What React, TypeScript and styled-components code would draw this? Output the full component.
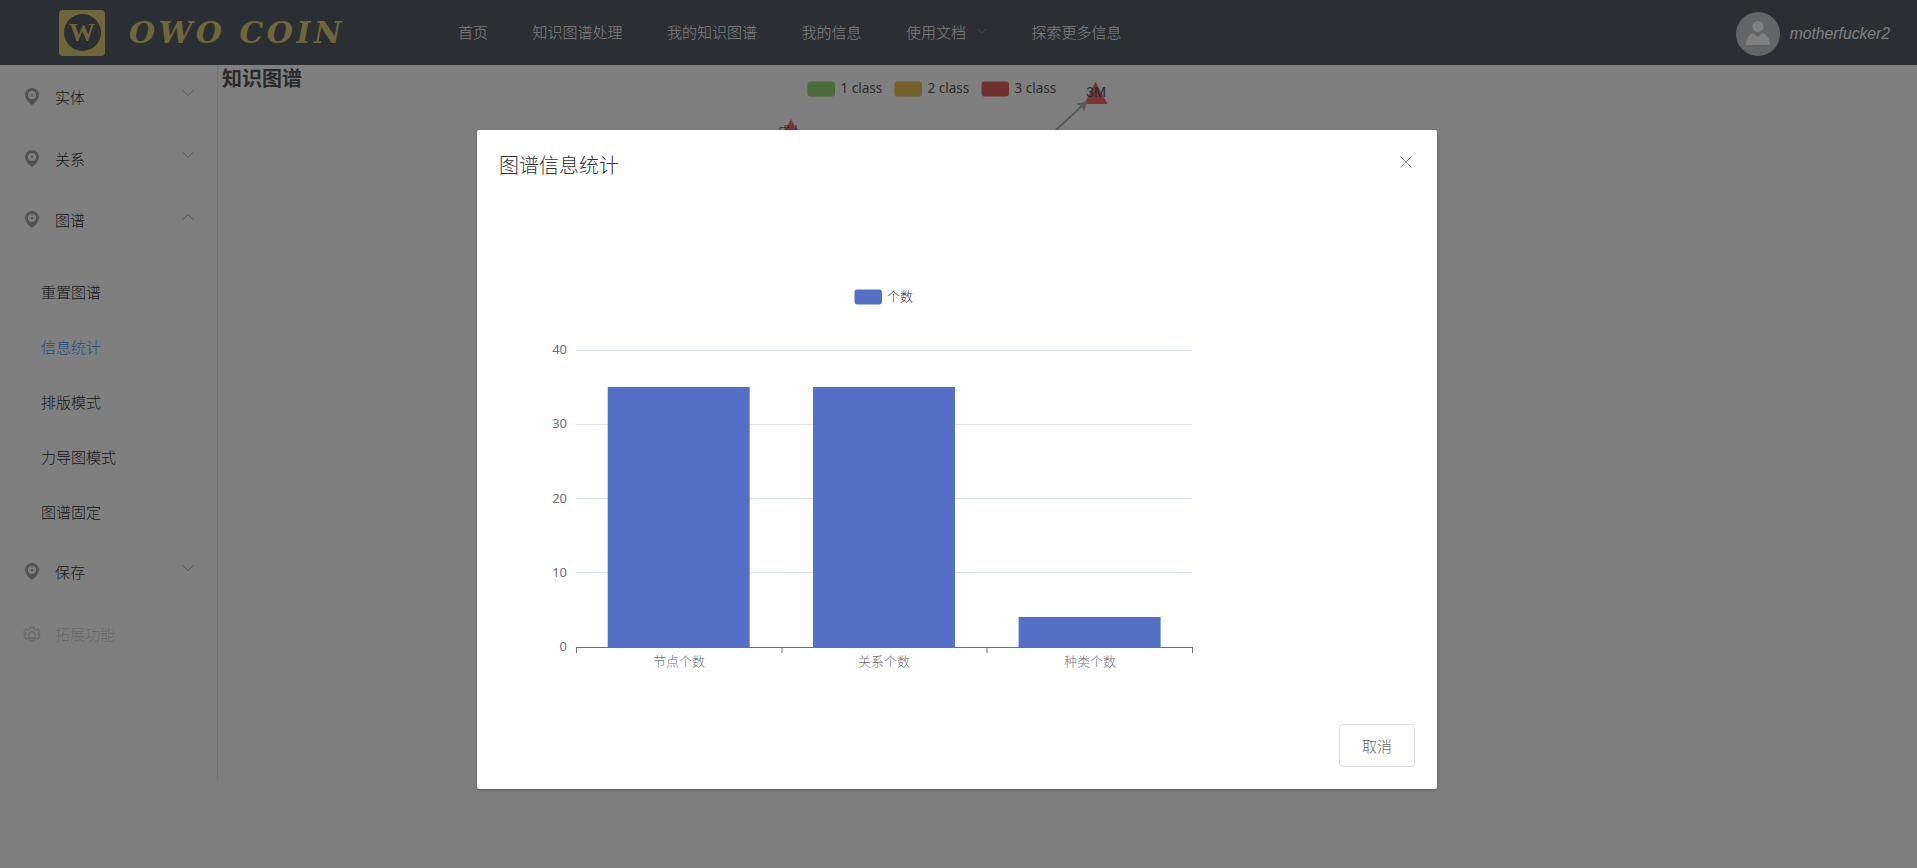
import React from "react";
import styled, { createGlobalStyle } from "styled-components";

const CJK = `"Liberation Sans", "Noto Sans CJK SC", sans-serif`;
const BAR = "#5470c6";
const AXIS = "#6e7079";
const GOLD = "#dccf72";
const HEADER = "#575c66";

const Global = createGlobalStyle`
  html, body { margin: 0; padding: 0; height: 100%; overflow: hidden; background: #fff; }
  body { font-family: ${CJK}; }
  #root { height: 100%; }
`;

const Page = styled.div`
  position: relative;
  width: 1917px;
  height: 868px;
  overflow: hidden;
  background: #fff;
`;

const Header = styled.header`
  display: flex;
  align-items: center;
  height: 65px;
  padding: 0 27px 0 59px;
  box-sizing: border-box;
  background: ${HEADER};
`;

const LogoMark = styled.div`
  display: flex;
  align-items: center;
  justify-content: center;
  flex: none;
  width: 46px;
  height: 46px;
  border-radius: 4px;
  background: ${GOLD};
`;

const LogoDisc = styled.div`
  display: flex;
  align-items: center;
  justify-content: center;
  width: 37px;
  height: 37px;
  border-radius: 50%;
  background: ${HEADER};
  color: ${GOLD};
  font: 700 26px "Liberation Serif", serif;
`;

const LogoWord = styled.div`
  flex: none;
  margin-left: 24px;
  width: 329px;
  color: ${GOLD};
  font: italic 700 30px "DejaVu Serif", serif;
  letter-spacing: 3.5px;
  white-space: nowrap;
`;

const Nav = styled.nav`
  display: flex;
  align-items: center;
  gap: 44.5px;
  flex: 1;
  padding-bottom: 3px;
`;

const NavItem = styled.span`
  display: flex;
  align-items: center;
  gap: 11px;
  color: #fff;
  font-size: 15px;
  font-weight: 300;
`;

const User = styled.div`
  display: flex;
  align-items: center;
  gap: 10px;
  margin-top: 3px;
`;

const Avatar = styled.div`
  display: flex;
  align-items: center;
  justify-content: center;
  width: 44px;
  height: 44px;
  border-radius: 50%;
  background: #c8cace;
`;

const UserName = styled.span`
  color: #fff;
  font: italic 15.7px "Liberation Sans", sans-serif;
`;

const Body = styled.div`
  display: flex;
  align-items: flex-start;
`;

const Side = styled.aside`
  flex: none;
  width: 218px;
  height: 715px;
  box-sizing: border-box;
  border-right: 1px solid #e6e6e6;
  display: flex;
  flex-direction: column;
`;

const MenuRow = styled.div<{ $h: number; $disabled?: boolean }>`
  display: flex;
  align-items: center;
  height: ${(p) => p.$h}px;
  padding: 0 23px;
  font-size: 15px;
  font-weight: 300;
  color: ${(p) => (p.$disabled ? "#d0d0d0" : "#303133")};
`;

const MenuIcon = styled.span<{ $drop?: number }>`
  display: flex;
  justify-content: center;
  width: 18px;
  margin-right: 14px;
  margin-top: ${(p) => p.$drop ?? 0}px;
`;

const MenuLabel = styled.span`
  flex: 1;
`;

const SubMenu = styled.div`
  padding-top: 14px;
  padding-bottom: 1px;
`;

const SubItem = styled.div<{ $active?: boolean }>`
  display: flex;
  align-items: center;
  height: 55px;
  padding-left: 41px;
  font-size: 15px;
  font-weight: 300;
  color: ${(p) => (p.$active ? "#409eff" : "#303133")};
`;

const Main = styled.main`
  position: relative;
  flex: 1;
  height: 698px;
`;

const Title = styled.h3`
  margin: 0;
  padding: 0 0 0 4px;
  font-size: 20px;
  line-height: 28px;
  font-weight: 700;
  color: #555;
`;

const Graph = styled.svg`
  position: absolute;
  left: -218px;
  top: -65px;
  width: 1917px;
  height: 868px;
  pointer-events: none;
`;

const Overlay = styled.div`
  position: absolute;
  inset: 0;
  background: rgba(0, 0, 0, 0.5);
`;

const Dialog = styled.section`
  position: absolute;
  left: 477px;
  top: 130px;
  width: 960px;
  height: 659px;
  display: flex;
  flex-direction: column;
  box-sizing: border-box;
  background: #fff;
  border-radius: 2px;
  box-shadow: 0 1px 3px rgba(0, 0, 0, 0.3);
`;

const DialogHead = styled.div`
  display: flex;
  align-items: center;
  justify-content: space-between;
  height: 50px;
  padding: 22px 24px 0 22px;
  box-sizing: border-box;
`;

const DialogTitle = styled.span`
  font-size: 20px;
  line-height: 30px;
  font-weight: 300;
  color: #303133;
`;

const Close = styled.span`
  display: flex;
  margin-top: -9px;
  width: 14px;
  height: 14px;
`;

const DialogBody = styled.div`
  flex: 1;
  padding: 0 22px;
`;

const ChartSvg = styled.svg`
  display: block;
`;

const Footer = styled.div`
  display: flex;
  justify-content: flex-end;
  padding: 0 22px 22px;
`;

const CancelButton = styled.button`
  width: 76px;
  height: 43px;
  padding: 0;
  background: #fff;
  border: 1px solid #dcdfe6;
  border-radius: 4px;
  color: #606266;
  font-size: 15px;
  font-weight: 300;
  font-family: ${CJK};
`;

const ChevronSvg = styled.svg<{ $lift: number }>`
  flex: none;
  margin-top: ${(p) => -p.$lift}px;
`;

const Chevron = ({ up, color = "#909399", size = 12, lift = 6 }: { up?: boolean; color?: string; size?: number; lift?: number }) => (
  <ChevronSvg $lift={lift} width={size} height={size} viewBox="0 0 12 12" fill="none" stroke={color} strokeWidth="0.9">
    <path d={up ? "M1 8.500 6 3.500l5 5" : "M1 3.500l5 5 5-5"} />
  </ChevronSvg>
);

const Pin = () => (
  <svg width="14" height="17" viewBox="0 0 14 17">
    <path
      fillRule="evenodd"
      fill="#a2a4aa"
      d="M7 0a7 7 0 0 1 7 7c0 3.600-3.800 7.600-7 10C3.800 14.600 0 10.600 0 7a7 7 0 0 1 7-7Zm0 3a4 4 0 1 0 0 8 4 4 0 0 0 0-8Zm0 2.800a1.200 1.200 0 1 1 0 2.400 1.200 1.200 0 0 1 0-2.400Z"
    />
  </svg>
);

const Gear = () => (
  <svg width="18" height="18" viewBox="0 0 18 18" fill="none" stroke="#d4d4d4" strokeWidth="1.400" strokeLinejoin="round">
    <path d="M7.200 1.200h3.600l.6 1.900 1.900.8 1.800-.9 1.800 3.100-1.500 1.300v1.200l1.500 1.300-1.800 3.100-1.800-.9-1.900.8-.6 1.900H7.200l-.6-1.900-1.900-.8-1.800.9-1.800-3.100 1.500-1.300V7.400L.9 6.100l1.800-3.100 1.800.9 1.900-.8Z" />
    <circle cx="9" cy="9" r="3.200" />
  </svg>
);

const GRID_Y = [350.5, 424.5, 498.5, 572.5];
const TICK_X = [576.5, 782, 987, 1192.5];
const bars = [
  { label: "节点个数", x: 607.7, top: 387, cx: 679 },
  { label: "关系个数", x: 813, top: 387, cx: 884 },
  { label: "种类个数", x: 1018.6, top: 617, cx: 1090 },
];

const Chart = () => (
  <ChartSvg width="780" height="490" viewBox="499 180 780 490">
    <rect x="854.500" y="289.500" width="27.500" height="15" rx="3" fill={BAR} />
    <text x="887" y="301" fontSize="13" fontWeight="300" fill="#333" fontFamily={CJK}>个数</text>
    {GRID_Y.map((y) => (
      <line key={y} x1="576" x2="1192.500" y1={y} y2={y} stroke="#e0e6f1" />
    ))}
    {[40, 30, 20, 10, 0].map((v, i) => (
      <text key={v} x="567" y={354 + i * 74.250} textAnchor="end" fontSize="13" fill={AXIS} fontFamily="'Noto Sans', sans-serif">
        {v}
      </text>
    ))}
    {bars.map((b) => (
      <rect key={b.label} x={b.x} y={b.top} width="142" height={647 - b.top} fill={BAR} />
    ))}
    <line x1="576" x2="1192.500" y1="647.500" y2="647.500" stroke={AXIS} />
    {TICK_X.map((x) => (
      <line key={x} x1={x} x2={x} y1="647" y2="653" stroke={AXIS} />
    ))}
    {bars.map((b) => (
      <text key={b.label} x={b.cx} y="666" textAnchor="middle" fontSize="13" fontWeight="300" fill={AXIS} fontFamily={CJK}>
        {b.label}
      </text>
    ))}
  </ChartSvg>
);

const legend = [
  { x: 807.500, c: "#98d878", t: "1 class" },
  { x: 894.500, c: "#e8c055", t: "2 class" },
  { x: 981.500, c: "#e06060", t: "3 class" },
];

export default function App() {
  return (
    <Page>
      <Global />
      <Header>
        <LogoMark>
          <LogoDisc>W</LogoDisc>
        </LogoMark>
        <LogoWord>OWO COIN</LogoWord>
        <Nav>
          <NavItem>首页</NavItem>
          <NavItem>知识图谱处理</NavItem>
          <NavItem>我的知识图谱</NavItem>
          <NavItem>我的信息</NavItem>
          <NavItem>
            使用文档
            <Chevron color="#909399" size={10} lift={0} />
          </NavItem>
          <NavItem>探索更多信息</NavItem>
        </Nav>
        <User>
          <Avatar>
            <svg width="26" height="26" viewBox="0 0 26 26" fill="#fff">
              <circle cx="13" cy="5.500" r="5.500" />
              <path d="M1 24c0-6 2.500-10 7-12l5 4 5-4c4.500 2 7 6 7 12Z" />
            </svg>
          </Avatar>
          <UserName>motherfucker2</UserName>
        </User>
      </Header>
      <Body>
        <Side>
          <MenuRow $h={62}>
            <MenuIcon><Pin /></MenuIcon>
            <MenuLabel>实体</MenuLabel>
            <Chevron />
          </MenuRow>
          <MenuRow $h={62}>
            <MenuIcon><Pin /></MenuIcon>
            <MenuLabel>关系</MenuLabel>
            <Chevron />
          </MenuRow>
          <MenuRow $h={61}>
            <MenuIcon><Pin /></MenuIcon>
            <MenuLabel>图谱</MenuLabel>
            <Chevron up />
          </MenuRow>
          <SubMenu>
            <SubItem>重置图谱</SubItem>
            <SubItem $active>信息统计</SubItem>
            <SubItem>排版模式</SubItem>
            <SubItem>力导图模式</SubItem>
            <SubItem>图谱固定</SubItem>
          </SubMenu>
          <MenuRow $h={62}>
            <MenuIcon><Pin /></MenuIcon>
            <MenuLabel>保存</MenuLabel>
            <Chevron />
          </MenuRow>
          <MenuRow $h={62} $disabled>
            <MenuIcon $drop={3}><Gear /></MenuIcon>
            <MenuLabel>拓展功能</MenuLabel>
          </MenuRow>
        </Side>
        <Main>
          <Title>知识图谱</Title>
          <Graph viewBox="0 0 1917 868">
            {legend.map((l) => (
              <g key={l.t}>
                <rect x={l.x} y="81.500" width="27.500" height="15" rx="3" fill={l.c} />
                <text x={l.x + 33} y="93" fontSize="13.500" fill="#555" fontFamily="'Noto Sans', sans-serif">{l.t}</text>
              </g>
            ))}
            <path d="M1095.500 81.500 1107.500 104H1084.500Z" fill="#f86a6a" />
            <text x="1086" y="97" fontSize="14.400" fill="#555" fontFamily="'Liberation Sans', sans-serif">3M</text>
            <line x1="1055" y1="131" x2="1084" y2="104" stroke="#aab2ba" strokeWidth="2" />
            <path d="M1087 101 1084 112 1082 106 1076 104Z" fill="#aab2ba" />
            <path d="M791 119 802 140H780Z" fill="#f86a6a" />
            <text x="778" y="136" fontSize="12" fill="#555" fontFamily={CJK}>成人</text>
          </Graph>
        </Main>
      </Body>
      <Overlay />
      <Dialog>
        <DialogHead>
          <DialogTitle>图谱信息统计</DialogTitle>
          <Close>
            <svg width="14" height="14" viewBox="0 0 14 14" stroke="#909399" strokeWidth="1" fill="none">
              <path d="M1.500 1.500l11 11M12.500 1.500l-11 11" />
            </svg>
          </Close>
        </DialogHead>
        <DialogBody>
          <Chart />
        </DialogBody>
        <Footer>
          <CancelButton>取消</CancelButton>
        </Footer>
      </Dialog>
    </Page>
  );
}
